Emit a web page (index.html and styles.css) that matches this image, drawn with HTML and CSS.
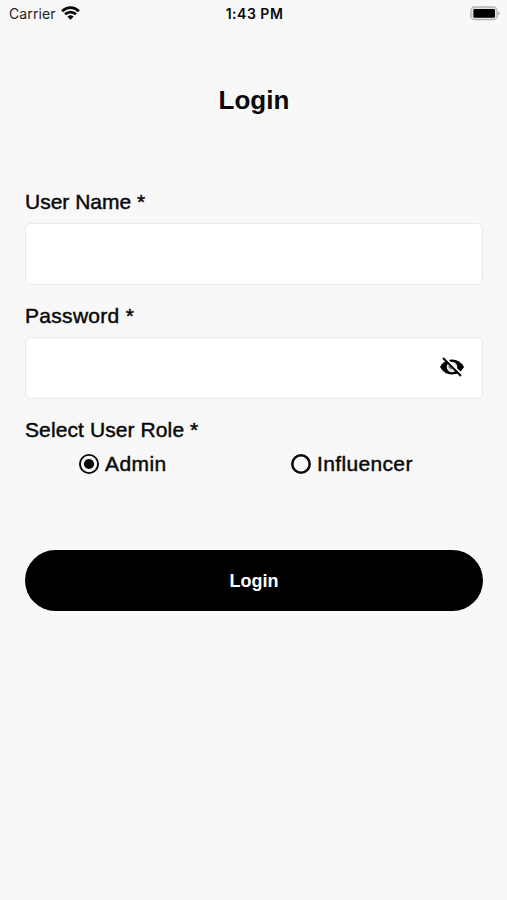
FILE: index.html
```html
<!DOCTYPE html>
<html lang="en">
<head>
<meta charset="utf-8">
<title>Login</title>
<link rel="stylesheet" href="styles.css">
</head>
<body>
<header class="status">
  <div class="carrier"><span>Carrier</span>
    <svg class="wifi" width="19" height="14" viewBox="0 0 19 14" fill="none" stroke="#080808" stroke-width="2.7">
      <path d="M1.1 5.2C6 .4 13 .4 17.9 5.2M4 8.3C7.2 5.3 11.8 5.3 15 8.3"/>
      <path d="M6.3 10.5Q9.5 8 12.7 10.5L9.5 13.7Z" fill="#080808" stroke="none"/>
    </svg>
  </div>
  <time class="time">1:43 PM</time>
  <svg class="battery" width="30" height="15" viewBox="0 0 30 15">
    <rect x=".9" y="1" width="26.2" height="12.7" rx="3.8" fill="#e2e2e2" stroke="#b5b5b5" stroke-width="1.3"/>
    <rect x="3.4" y="3" width="21.6" height="8.8" rx="1.3" fill="#000"/>
    <path d="M28.2 5Q31 7.3 28.2 9.6Z" fill="#aaa"/>
  </svg>
</header>
<main class="page">
  <h1 class="title">Login</h1>
  <form class="form">
    <label class="label name-label" for="user">User Name *</label>
    <div class="field"><input id="user" type="text"></div>
    <label class="label password-label" for="password">Password *</label>
    <div class="field">
      <input id="password" type="password">
      <svg class="eye" width="26" height="22" viewBox="0 0 26 22">
        <path d="M1 11Q5 3.5 13 3.5T25 11Q21 18.5 13 18.5T1 11Z" fill="#000"/>
        <circle cx="13" cy="11" r="5.3" fill="#e4e4e4"/>
        <path d="M9.6 10.2L12.4 13M13.4 9L15.2 10.8" stroke="#666" stroke-width="1.4"/>
        <path d="M5.2 .8L23.2 18.8" stroke="#fff" stroke-width="2"/>
        <path d="M4 2L22 20" stroke="#000" stroke-width="1.9"/>
      </svg>
    </div>
    <div class="label role-label">Select User Role *</div>
    <div class="roles">
      <div class="role">
        <svg width="22" height="22" viewBox="0 0 22 22"><circle cx="11" cy="11" r="9.1" fill="none" stroke="#080808" stroke-width="1.9"/><circle cx="11" cy="11" r="5.1" fill="#080808"/></svg>
        <span class="label admin">Admin</span>
      </div>
      <div class="role">
        <svg width="22" height="22" viewBox="0 0 22 22"><circle cx="11" cy="11" r="8.7" fill="none" stroke="#080808" stroke-width="2.5"/></svg>
        <span class="label influencer">Influencer</span>
      </div>
    </div>
    <button class="submit" type="button">Login</button>
  </form>
</main>
</body>
</html>
```
FILE: styles.css
```css
* { box-sizing: border-box; }
body {
  margin: 0;
  min-height: 900px;
  background: #f8f8f8;
  color: #080808;
  font-family: "Liberation Sans", Arial, sans-serif;
}
.status {
  display: grid;
  grid-template-columns: 1fr auto 1fr;
  align-items: center;
  height: 27px;
  padding: 0 7px 0 9px;
  font-family: Inter, sans-serif;
  font-size: 14px;
}
.carrier { display: flex; align-items: center; gap: 5px; color: #222; letter-spacing: .1px; }
.wifi { margin-top: -1px; }
.time { font-weight: 600; letter-spacing: .5px; }
.battery { justify-self: end; margin-top: -1px; }
.page { padding: 0 24px 0 25px; }
.title {
  margin: 57px 0 0;
  font-size: 26px;
  line-height: 32px;
  text-align: center;
}
.form { display: flex; flex-direction: column; }
.label {
  font-size: 21px;
  line-height: 26px;
  letter-spacing: .1px;
  white-space: nowrap;
  -webkit-text-stroke: .45px currentColor;
}
.name-label { margin-top: 73px; letter-spacing: 0; }
.password-label { margin-top: 18px; letter-spacing: .3px; }
.role-label { margin-top: 18px; }
.admin { letter-spacing: .4px; }
.influencer { letter-spacing: .35px; }
.field {
  display: flex;
  align-items: center;
  height: 62px;
  margin-top: 8px;
  padding-right: 17px;
  background: #fff;
  border: 1px solid #e9e9e9;
  border-radius: 6px;
}
.field input {
  flex: 1;
  min-width: 0;
  height: 100%;
  padding: 0 16px;
  border: 0;
  outline: 0;
  background: transparent;
  font-size: 21px;
}
.eye { margin-top: -2px; }
.roles {
  display: grid;
  grid-template-columns: 212px 1fr;
  margin: 8px 0 0 53px;
}
.role { display: flex; align-items: center; gap: 5px; height: 26px; }
.submit {
  height: 61px;
  margin-top: 73px;
  padding: 2px 0 0;
  border: 0;
  border-radius: 31px;
  background: #000;
  color: #fff;
  font: bold 18px "Liberation Sans", Arial, sans-serif;
}
```
